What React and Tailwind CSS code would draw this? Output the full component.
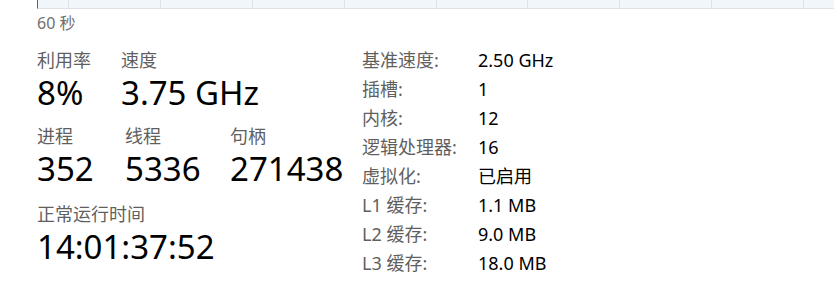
import React from 'react'

const font = { fontFamily: '"Noto Sans", "Noto Sans CJK SC", sans-serif' }

const gridCells = [31, 92, 92, 92, 92, 91, 92, 92, 92, 92]

const specs = [
  ['基准速度:', '2.50 GHz'],
  ['插槽:', '1'],
  ['内核:', '12'],
  ['逻辑处理器:', '16'],
  ['虚拟化:', '已启用'],
  ['L1 缓存:', '1.1 MB'],
  ['L2 缓存:', '9.0 MB'],
  ['L3 缓存:', '18.0 MB'],
]

function Stat({ label, value, width }) {
  return (
    <div className={width}>
      <div className="h-[29px] text-[18px] leading-[29px] text-[#5f5f5f] whitespace-nowrap">{label}</div>
      <div className="h-[36px] text-[33px] leading-[36px] text-black whitespace-nowrap">{value}</div>
    </div>
  )
}

export default function App() {
  return (
    <div className="w-[834px] h-[291px] bg-white overflow-hidden" style={font}>
      {/* 图表底部 */}
      <div className="ml-[37px] h-[9px] flex bg-[#f1f6fa] border-l border-l-[#117dbb] border-b border-b-[#dde2e6]">
        {gridCells.map((w, i) => (
          <div key={i} className="h-full border-r border-r-[#dde3e9] shrink-0" style={{ width: w }} />
        ))}
      </div>

      <div className="ml-[37px] mt-[4px] h-[20px] text-[16px] leading-[20px] text-[#707070]">60 秒</div>

      <div className="flex mt-[13px] pl-[37px]">
        <div className="w-[325px] shrink-0">
          <div className="flex">
            <Stat label="利用率" value="8%" width="w-[84px]" />
            <Stat label="速度" value="3.75 GHz" width="w-[200px]" />
          </div>
          <div className="flex mt-[11px]">
            <Stat label="进程" value="352" width="w-[88px]" />
            <Stat label="线程" value="5336" width="w-[105px]" />
            <Stat label="句柄" value="271438" width="w-[120px]" />
          </div>
          <div className="mt-[13px]">
            <Stat label="正常运行时间" value="14:01:37:52" width="w-[250px]" />
          </div>
        </div>

        <div className="flex flex-col">
          {specs.map(([k, v]) => (
            <div key={k} className="flex h-[29px] text-[18px] leading-[29px] whitespace-nowrap">
              <span className="w-[116px] text-[#5f5f5f]">{k}</span>
              <span className="text-black">{v}</span>
            </div>
          ))}
        </div>
      </div>
    </div>
  )
}
